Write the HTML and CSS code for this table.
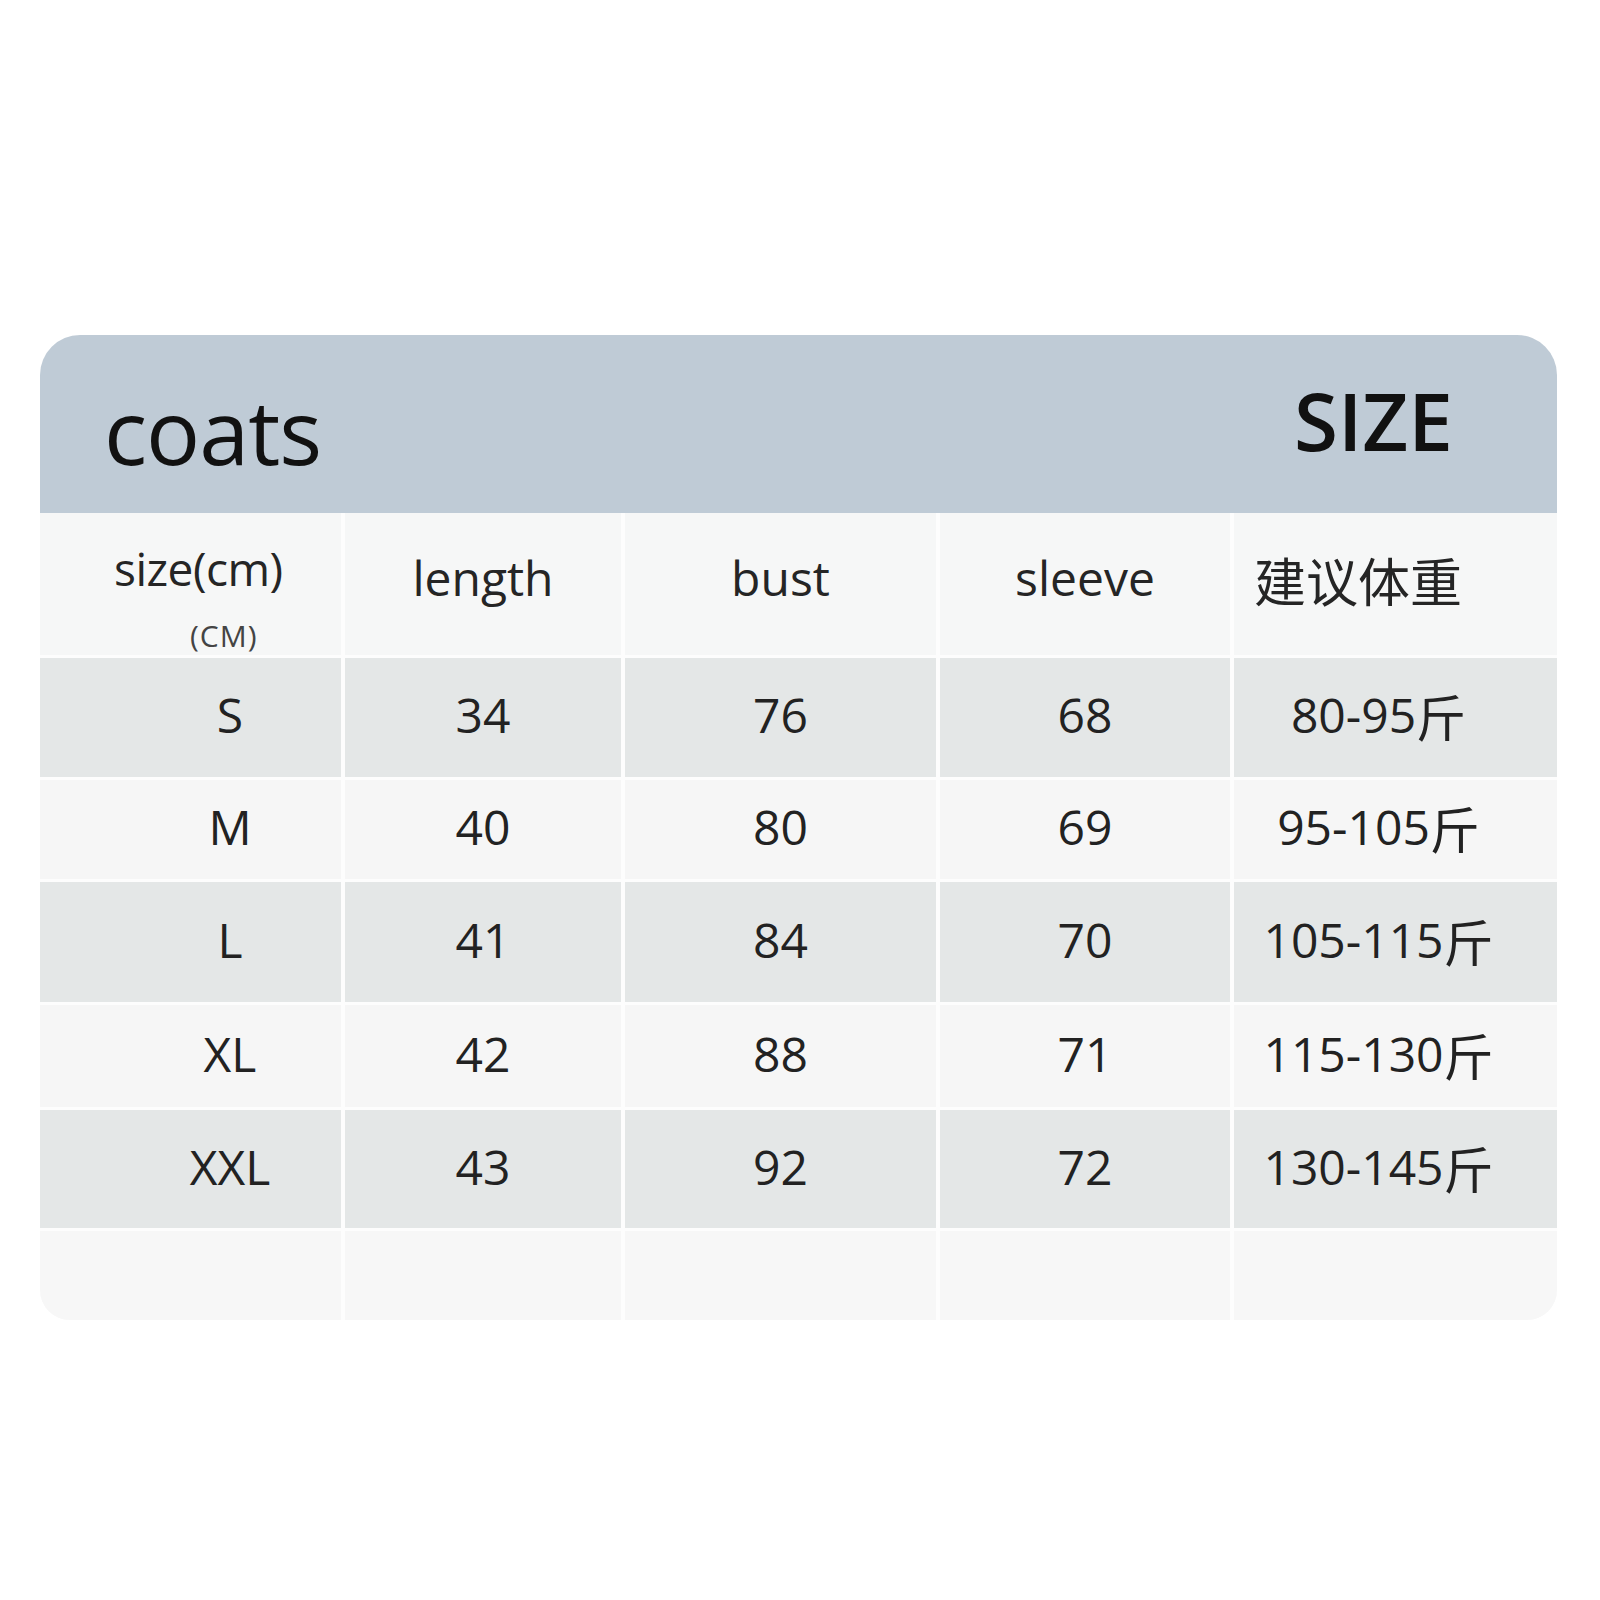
FILE: index.html
```html
<!DOCTYPE html>
<html lang="zh">
<head>
<meta charset="utf-8">
<title>coats SIZE</title>
<link rel="stylesheet" href="styles.css">
</head>
<body>
<div class="page">
  <div class="card">
    <div class="banner">
      <div class="title">coats</div>
      <div class="size-word">SIZE</div>
    </div>
    <div class="grid">
      <div class="cell head first">
        <div class="l1">size(cm)</div>
        <div class="l2">(CM)</div>
      </div>
      <div class="cell head">length</div>
      <div class="cell head">bust</div>
      <div class="cell head">sleeve</div>
      <div class="cell head cjk">建议体重</div>

      <div class="cell gray c1">S</div>
      <div class="cell gray">34</div>
      <div class="cell gray">76</div>
      <div class="cell gray">68</div>
      <div class="cell gray c5">80-95<span class="jin">斤</span></div>

      <div class="cell light c1">M</div>
      <div class="cell light">40</div>
      <div class="cell light">80</div>
      <div class="cell light">69</div>
      <div class="cell light c5">95-105<span class="jin">斤</span></div>

      <div class="cell gray c1">L</div>
      <div class="cell gray">41</div>
      <div class="cell gray">84</div>
      <div class="cell gray">70</div>
      <div class="cell gray c5">105-115<span class="jin">斤</span></div>

      <div class="cell light c1">XL</div>
      <div class="cell light">42</div>
      <div class="cell light">88</div>
      <div class="cell light">71</div>
      <div class="cell light c5">115-130<span class="jin">斤</span></div>

      <div class="cell gray c1">XXL</div>
      <div class="cell gray">43</div>
      <div class="cell gray">92</div>
      <div class="cell gray">72</div>
      <div class="cell gray c5">130-145<span class="jin">斤</span></div>

      <div class="cell empty"></div>
      <div class="cell empty"></div>
      <div class="cell empty"></div>
      <div class="cell empty"></div>
      <div class="cell empty"></div>
    </div>
  </div>
</div>
</body>
</html>
```
FILE: styles.css
```css
html, body {
  margin: 0;
  padding: 0;
  background: #ffffff;
}

body {
  font-family: "Open Sans", "Noto Sans CJK SC", sans-serif;
  color: #1c1c1c;
}

.page {
  width: 1600px;
  height: 1600px;
  padding: 335px 0 0 40px;
  box-sizing: border-box;
}

.card {
  width: 1517px;
  border-radius: 40px 40px 30px 30px;
  overflow: hidden;
  background: #fbfbfb;
}

.banner {
  height: 178px;
  box-sizing: border-box;
  background: #bfcbd6;
  display: flex;
  justify-content: space-between;
  align-items: flex-start;
  padding: 45px 104px 0 64px;
}

.title {
  font-size: 90px;
  line-height: 1;
  font-weight: 500;
  color: #111;
  margin-top: 5px;
  letter-spacing: -1px;
}

.size-word {
  font-size: 80px;
  line-height: 1;
  font-weight: 600;
  color: #111;
}

.grid {
  display: grid;
  grid-template-columns: 301px 276px 311px 290px 323px;
  grid-template-rows: 142px 119px 99px 120px 102px 118px 89px;
  column-gap: 4px;
  row-gap: 3px;
  background: #fdfdfd;
}

.cell {
  display: flex;
  align-items: center;
  justify-content: center;
  font-size: 48px;
  line-height: 1;
  color: #222;
  box-sizing: border-box;
  padding-bottom: 5px;
}

.head {
  background: #f6f7f7;
  padding-bottom: 12px;
  color: #252525;
}

.head.first {
  flex-direction: column;
  align-items: flex-start;
  justify-content: flex-start;
  padding: 26px 0 0 74px;
}

.head.first .l1 {
  font-size: 46px;
  line-height: 58px;
  letter-spacing: -0.5px;
}

.head.first .l2 {
  font-size: 30px;
  line-height: 34px;
  margin-top: 22px;
  margin-left: 76px;
  letter-spacing: 1px;
  color: #444;
}

.head.cjk {
  font-family: "Noto Sans CJK SC", sans-serif;
  font-size: 52px;
  justify-content: flex-start;
  padding-left: 20px;
  padding-bottom: 8px;
}

.gray {
  background: #e4e7e7;
}

.light {
  background: #f6f6f6;
}

.empty {
  background: #f7f7f7;
}

.c1 {
  padding-left: 79px;
}

.c5 {
  padding-right: 34px;
}

.jin {
  font-family: "Noto Sans CJK SC", sans-serif;
  font-size: 50px;
}
```
